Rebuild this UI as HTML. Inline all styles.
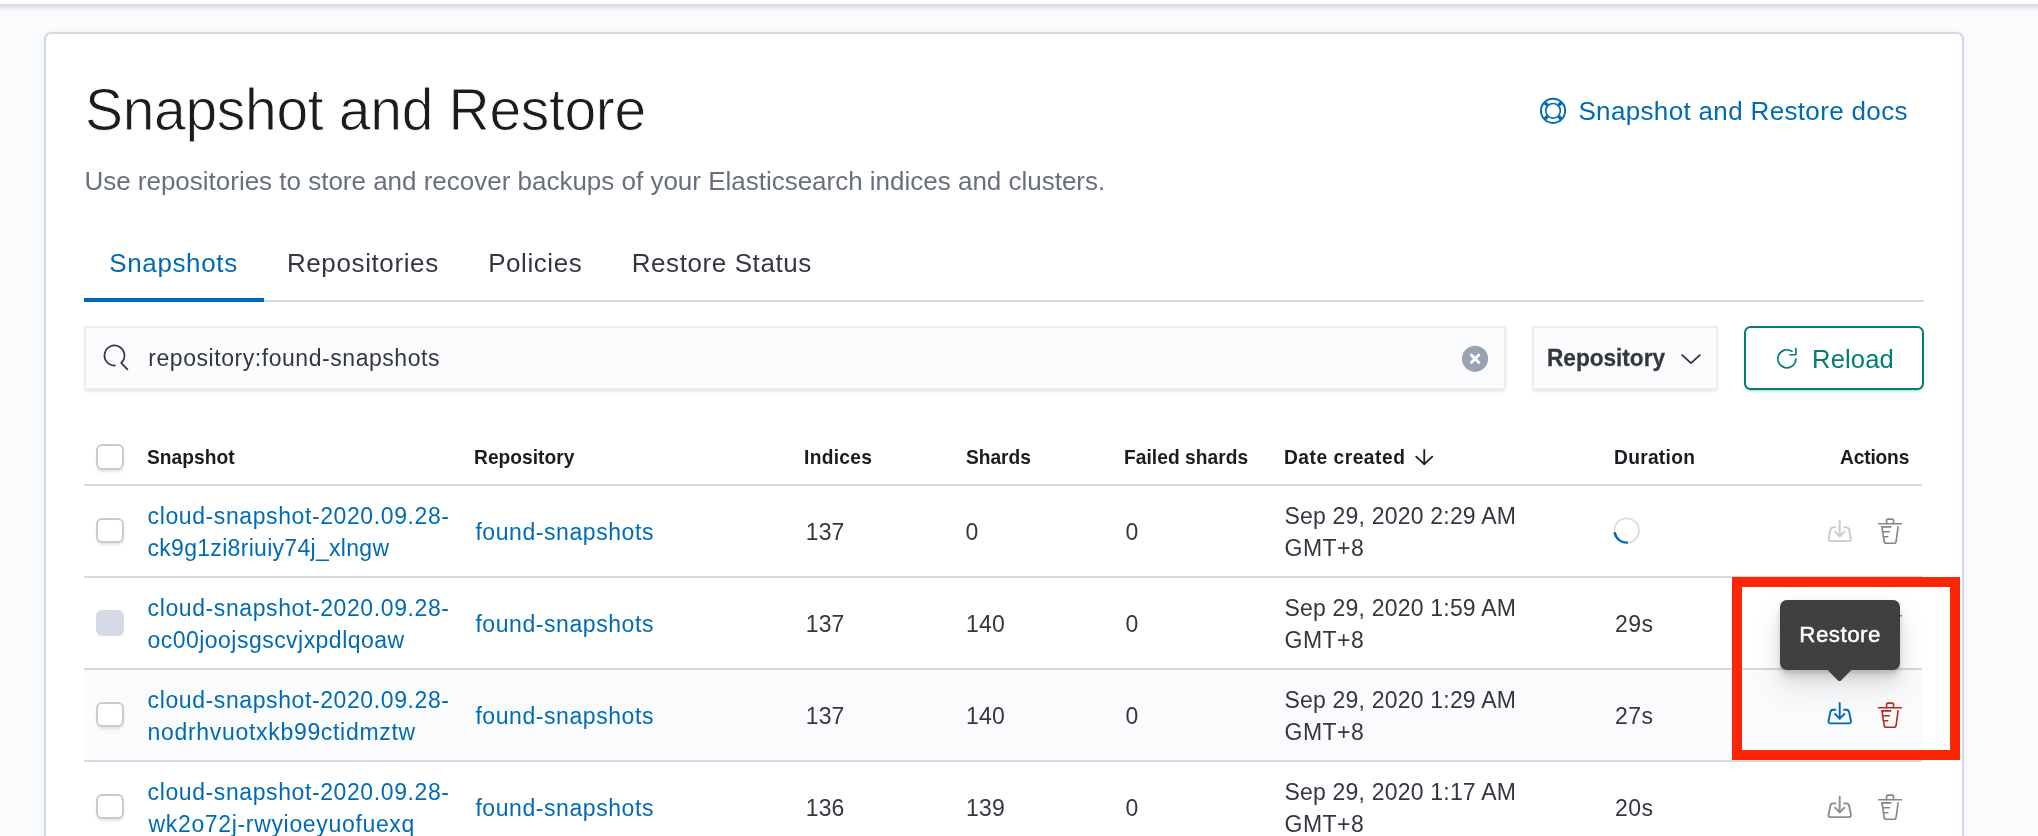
<!DOCTYPE html>
<html lang="en">
<head>
<meta charset="utf-8">
<title>Snapshot and Restore</title>
<style>
html,body{margin:0;padding:0}
body{width:2038px;height:836px;overflow:hidden;background:#fafbfd;position:relative;font-family:"Liberation Sans",sans-serif;color:#343741}
.abs,.t{position:absolute}
.t{white-space:nowrap;display:block;margin:0;padding:0;font-weight:400}
.title{-webkit-text-stroke:0.9px #fff}
.tip{-webkit-text-stroke:0.45px #fff}
.b{-webkit-text-stroke:0.3px #343741}
#topbar{left:0;top:0;width:2038px;height:4px;background:#fff;box-shadow:0 0 0 0 #000}
#topshadow{left:0;top:4px;width:2038px;height:8px;background:linear-gradient(#cfd5e2 0,#dde1ea 25%,#eef0f5 60%,#fafbfd 100%)}
#panel{left:44px;top:32px;width:1916px;height:900px;border:2px solid #d3dae6;border-radius:7px;background:#fff;box-shadow:0 1px 6px -2px rgba(152,162,179,.3)}
#tabline{left:84px;top:300px;width:1840px;height:2px;background:#d3dae6}
#tabsel{left:84px;top:298px;width:180px;height:4px;background:#006bb4}
.field{background:#fbfcfd;border:2px solid #eaedf3;box-sizing:border-box;box-shadow:0 2px 3px -1px rgba(152,162,179,.35)}
#search{left:84px;top:326px;width:1422px;height:64px}
#filter{left:1532px;top:326px;width:186px;height:64px}
#reload{left:1744px;top:326px;width:180px;height:64px;box-sizing:border-box;border:2px solid #017d73;border-radius:6.5px;background:#fff;box-shadow:0 2px 3px -1px rgba(1,125,115,.35)}
.hline{left:84px;width:1838px;height:2px;background:#d3dae6}
.rowbg{left:84px;width:1838px;height:90px;background:#fafbfd}
.cb{left:96px;width:28px;height:25px;box-sizing:border-box;border:2px solid #c9cbcd;border-radius:6px;background:#fff;box-shadow:0 3px 3px -1px rgba(152,162,179,.3)}
.cb.dis{border:0;background:#d3dae6;box-shadow:none}
#redbox{left:1732px;top:577px;width:208px;height:163px;border:10px solid #fb2604}
#tip{left:1780px;top:600px;width:120px;height:70px;border-radius:7px;background:#404040;box-shadow:0 18px 36px 0 rgba(0,0,0,.09),0 9px 18px 0 rgba(0,0,0,.09),0 6px 6px 0 rgba(0,0,0,.08),0 3px 3px 0 rgba(0,0,0,.08)}
#tiparrow{left:1830.2px;top:659px;width:19px;height:19px;background:#404040;transform:rotate(45deg);border-radius:2.5px}
svg{position:absolute;overflow:visible}
#txt{left:0;top:0;width:2038px;height:836px;will-change:transform}
</style>
</head>
<body>
<div class="abs" id="topbar"></div>
<div class="abs" id="topshadow"></div>
<div class="abs" id="panel"></div>

<div class="abs" id="tabline"></div>
<div class="abs" id="tabsel"></div>

<div class="abs field" id="search"></div>
<div class="abs field" id="filter"></div>
<div class="abs" id="reload"></div>

<div class="abs hline" style="top:484px"></div>
<div class="abs hline" style="top:576px"></div>
<div class="abs hline" style="top:668px"></div>
<div class="abs rowbg" style="top:670px"></div>
<div class="abs hline" style="top:760px"></div>

<div class="abs cb" style="top:444px;height:26px"></div>
<div class="abs cb" style="top:518px"></div>
<div class="abs cb dis" style="top:610px;height:26px"></div>
<div class="abs cb" style="top:702px"></div>
<div class="abs cb" style="top:794px"></div>

<svg width="2038" height="836" viewBox="0 0 2038 836" style="left:0;top:0" fill="none" stroke-linecap="round" stroke-linejoin="round">
  <!-- help / lifesaver icon -->
  <g stroke="#006bb4">
    <circle cx="1553.05" cy="110.85" r="12.1" stroke-width="1.9"/>
    <circle cx="1553.05" cy="110.85" r="7.3" stroke-width="1.6"/>
    <path stroke-width="3.4" stroke-linecap="butt" d="M1547.6 105.4L1544.9 102.7M1558.5 105.4L1561.2 102.7M1547.6 116.3L1544.9 119M1558.5 116.3L1561.2 119"/>
  </g>
  <!-- search icon -->
  <g stroke="#343741" stroke-width="1.75">
    <path d="M114.9 365.5A10 10 0 1 1 121.2 362.9L127.4 369.3"/>
  </g>
  <!-- clear button -->
  <circle cx="1475.05" cy="358.85" r="13.05" fill="#98a2b3"/>
  <path d="M1471.3 355.1L1478.8 362.6M1478.8 355.1L1471.3 362.6" stroke="#fff" stroke-width="2.8"/>
  <!-- chevron -->
  <path d="M1682.2 355.1L1691 363.1L1699.8 355.1" stroke="#343741" stroke-width="1.9"/>
  <!-- refresh -->
  <g stroke="#017d73" stroke-width="1.65">
    <path d="M1792 351.4A9 9 0 1 0 1795.85 358.9"/>
    <path d="M1795.9 348.1V354.7H1789.4" stroke-linecap="butt"/>
  </g>
  <!-- sort arrow -->
  <g stroke="#1a1c21" stroke-width="1.8">
    <path d="M1424.25 449.9V464"/>
    <path d="M1416.2 456.7L1424.25 464.2L1432.3 456.7"/>
  </g>
  <!-- spinner -->
  <circle cx="1626.7" cy="530.5" r="12.2" stroke="#d6dce8" stroke-width="1.8"/>
  <path d="M1614.6 532.3A12.2 12.2 0 0 0 1627.9 542.6" stroke="#006bb4" stroke-width="2.4" stroke-linecap="butt"/>
  <!-- row action icons -->
  <g stroke="#c9cacc" stroke-width="1.9">
    <path d="M1839.7 520.7V536.2"/>
      <path d="M1835.1 531.7L1839.7 536.4L1844.4 531.7"/>
      <path d="M1835.4 527.4H1833.2Q1830.9 527.4 1830.4 529.7L1828.6 538.4Q1828 541.1 1830.7 541.1H1848.8Q1851.5 541.1 1850.9 538.4L1849.1 529.7Q1848.6 527.4 1846.3 527.4H1844.1"/>
  </g>
  <g stroke="#848486" stroke-width="1.6">
    <path d="M1886.6 523.6V520.6Q1886.6 519.1 1888.1 519.1H1892Q1893.5 519.1 1893.5 520.6V523.6"/>
      <path d="M1878.7 523.7H1901.4"/>
      <path d="M1882 526.9L1884.1 541.3Q1884.4 543.3 1886.4 543.3H1893.8Q1895.8 543.3 1896.1 541.3L1898.1 526.9"/>
      <path d="M1882 526.9H1890.8M1882.9 531.8H1889.3M1883.6 536.8H1887.8"/>
  </g>
  <g stroke="#8c8c8e" stroke-width="1.9" transform="translate(0 92)">
    <path d="M1839.7 520.7V536.2"/>
      <path d="M1835.1 531.7L1839.7 536.4L1844.4 531.7"/>
      <path d="M1835.4 527.4H1833.2Q1830.9 527.4 1830.4 529.7L1828.6 538.4Q1828 541.1 1830.7 541.1H1848.8Q1851.5 541.1 1850.9 538.4L1849.1 529.7Q1848.6 527.4 1846.3 527.4H1844.1"/>
  </g>
  <g stroke="#848486" stroke-width="1.6" transform="translate(0 92)">
    <path d="M1886.6 523.6V520.6Q1886.6 519.1 1888.1 519.1H1892Q1893.5 519.1 1893.5 520.6V523.6"/>
      <path d="M1878.7 523.7H1901.4"/>
      <path d="M1882 526.9L1884.1 541.3Q1884.4 543.3 1886.4 543.3H1893.8Q1895.8 543.3 1896.1 541.3L1898.1 526.9"/>
      <path d="M1882 526.9H1890.8M1882.9 531.8H1889.3M1883.6 536.8H1887.8"/>
  </g>
  <g stroke="#006bb4" stroke-width="1.9" transform="translate(0 182.3)">
    <path d="M1839.7 520.7V536.2"/>
      <path d="M1835.1 531.7L1839.7 536.4L1844.4 531.7"/>
      <path d="M1835.4 527.4H1833.2Q1830.9 527.4 1830.4 529.7L1828.6 538.4Q1828 541.1 1830.7 541.1H1848.8Q1851.5 541.1 1850.9 538.4L1849.1 529.7Q1848.6 527.4 1846.3 527.4H1844.1"/>
  </g>
  <g stroke="#bd271e" stroke-width="1.6" transform="translate(0 184)">
    <path d="M1886.6 523.6V520.6Q1886.6 519.1 1888.1 519.1H1892Q1893.5 519.1 1893.5 520.6V523.6"/>
      <path d="M1878.7 523.7H1901.4"/>
      <path d="M1882 526.9L1884.1 541.3Q1884.4 543.3 1886.4 543.3H1893.8Q1895.8 543.3 1896.1 541.3L1898.1 526.9"/>
      <path d="M1882 526.9H1890.8M1882.9 531.8H1889.3M1883.6 536.8H1887.8"/>
  </g>
  <g stroke="#8c8c8e" stroke-width="1.9" transform="translate(0 276)">
    <path d="M1839.7 520.7V536.2"/>
      <path d="M1835.1 531.7L1839.7 536.4L1844.4 531.7"/>
      <path d="M1835.4 527.4H1833.2Q1830.9 527.4 1830.4 529.7L1828.6 538.4Q1828 541.1 1830.7 541.1H1848.8Q1851.5 541.1 1850.9 538.4L1849.1 529.7Q1848.6 527.4 1846.3 527.4H1844.1"/>
  </g>
  <g stroke="#848486" stroke-width="1.6" transform="translate(0 276)">
    <path d="M1886.6 523.6V520.6Q1886.6 519.1 1888.1 519.1H1892Q1893.5 519.1 1893.5 520.6V523.6"/>
      <path d="M1878.7 523.7H1901.4"/>
      <path d="M1882 526.9L1884.1 541.3Q1884.4 543.3 1886.4 543.3H1893.8Q1895.8 543.3 1896.1 541.3L1898.1 526.9"/>
      <path d="M1882 526.9H1890.8M1882.9 531.8H1889.3M1883.6 536.8H1887.8"/>
  </g>
</svg>


<div class="abs" id="tip"></div>
<div class="abs" id="tiparrow"></div>
<div class="abs" id="txt">
<h1 class="t title" style="left:85.00px;top:71px;font-size:60px;line-height:78px;letter-spacing:-0.331px;color:#1a1c21;transform:scaleX(0.95);transform-origin:0 0">Snapshot and Restore</h1>
<span class="t" style="left:1578.40px;top:94px;font-size:26px;line-height:34px;letter-spacing:0.343px;color:#006bb4">Snapshot and Restore docs</span>
<p class="t" style="left:84.40px;top:164px;font-size:26px;line-height:34px;letter-spacing:-0.010px;color:#69707d">Use repositories to store and recover backups of your Elasticsearch indices and clusters.</p>
<span class="t" style="left:109.20px;top:246px;font-size:26px;line-height:34px;letter-spacing:0.642px;color:#006bb4">Snapshots</span>
<span class="t" style="left:286.90px;top:246px;font-size:26px;line-height:34px;letter-spacing:0.617px;color:#343741">Repositories</span>
<span class="t" style="left:488.20px;top:246px;font-size:26px;line-height:34px;letter-spacing:0.558px;color:#343741">Policies</span>
<span class="t" style="left:631.70px;top:246px;font-size:26px;line-height:34px;letter-spacing:0.587px;color:#343741">Restore Status</span>
<span class="t" style="left:148.30px;top:343px;font-size:23px;line-height:30px;letter-spacing:0.550px;color:#343741">repository:found-snapshots</span>
<span class="t b" style="left:1546.57px;top:342px;font-size:24.3px;line-height:32px;letter-spacing:-0.005px;color:#343741;font-weight:700;transform:scaleX(0.93);transform-origin:0 0">Repository</span>
<span class="t" style="left:1812.10px;top:343px;font-size:25.6px;line-height:33px;letter-spacing:0.126px;color:#017d73">Reload</span>
<span class="t" style="left:147.10px;top:444px;font-size:20.4px;line-height:27px;letter-spacing:0.043px;color:#1a1c21;font-weight:700;transform:scaleX(0.94);transform-origin:0 0">Snapshot</span>
<span class="t" style="left:474.26px;top:444px;font-size:20.4px;line-height:27px;letter-spacing:0.036px;color:#1a1c21;font-weight:700;transform:scaleX(0.94);transform-origin:0 0">Repository</span>
<span class="t" style="left:804.16px;top:444px;font-size:20.4px;line-height:27px;letter-spacing:0.322px;color:#1a1c21;font-weight:700;transform:scaleX(0.94);transform-origin:0 0">Indices</span>
<span class="t" style="left:965.50px;top:444px;font-size:20.4px;line-height:27px;letter-spacing:-0.034px;color:#1a1c21;font-weight:700;transform:scaleX(0.94);transform-origin:0 0">Shards</span>
<span class="t" style="left:1124.26px;top:444px;font-size:20.4px;line-height:27px;letter-spacing:0.061px;color:#1a1c21;font-weight:700;transform:scaleX(0.94);transform-origin:0 0">Failed shards</span>
<span class="t" style="left:1284.06px;top:444px;font-size:20.4px;line-height:27px;letter-spacing:0.562px;color:#1a1c21;font-weight:700;transform:scaleX(0.94);transform-origin:0 0">Date created</span>
<span class="t" style="left:1614.06px;top:444px;font-size:20.4px;line-height:27px;letter-spacing:0.315px;color:#1a1c21;font-weight:700;transform:scaleX(0.94);transform-origin:0 0">Duration</span>
<span class="t" style="left:1840.00px;top:444px;font-size:20.4px;line-height:27px;letter-spacing:-0.171px;color:#1a1c21;font-weight:700;transform:scaleX(0.94);transform-origin:0 0">Actions</span>
<span class="t" style="left:147.60px;top:501px;font-size:23px;line-height:30px;letter-spacing:0.597px;color:#006bb4">cloud-snapshot-2020.09.28-</span>
<span class="t" style="left:147.50px;top:533px;font-size:23px;line-height:30px;letter-spacing:0.299px;color:#006bb4">ck9g1zi8riuiy74j_xlngw</span>
<span class="t" style="left:475.40px;top:517px;font-size:23px;line-height:30px;letter-spacing:0.567px;color:#006bb4">found-snapshots</span>
<span class="t" style="left:805.80px;top:517px;font-size:23px;line-height:30px;letter-spacing:0.058px;color:#343741">137</span>
<span class="t" style="left:965.50px;top:517px;font-size:23px;line-height:30px;letter-spacing:0.000px;color:#343741">0</span>
<span class="t" style="left:1125.50px;top:517px;font-size:23px;line-height:30px;letter-spacing:0.000px;color:#343741">0</span>
<span class="t" style="left:1284.50px;top:501px;font-size:23px;line-height:30px;letter-spacing:0.198px;color:#343741">Sep 29, 2020 2:29 AM</span>
<span class="t" style="left:1284.50px;top:533px;font-size:23px;line-height:30px;letter-spacing:0.492px;color:#343741">GMT+8</span>
<span class="t" style="left:147.60px;top:593px;font-size:23px;line-height:30px;letter-spacing:0.597px;color:#006bb4">cloud-snapshot-2020.09.28-</span>
<span class="t" style="left:147.50px;top:625px;font-size:23px;line-height:30px;letter-spacing:0.469px;color:#006bb4">oc00joojsgscvjxpdlqoaw</span>
<span class="t" style="left:475.40px;top:609px;font-size:23px;line-height:30px;letter-spacing:0.567px;color:#006bb4">found-snapshots</span>
<span class="t" style="left:805.80px;top:609px;font-size:23px;line-height:30px;letter-spacing:0.058px;color:#343741">137</span>
<span class="t" style="left:965.90px;top:609px;font-size:23px;line-height:30px;letter-spacing:0.308px;color:#343741">140</span>
<span class="t" style="left:1125.50px;top:609px;font-size:23px;line-height:30px;letter-spacing:0.000px;color:#343741">0</span>
<span class="t" style="left:1284.50px;top:593px;font-size:23px;line-height:30px;letter-spacing:0.198px;color:#343741">Sep 29, 2020 1:59 AM</span>
<span class="t" style="left:1284.50px;top:625px;font-size:23px;line-height:30px;letter-spacing:0.492px;color:#343741">GMT+8</span>
<span class="t" style="left:1615.00px;top:609px;font-size:23px;line-height:30px;letter-spacing:0.458px;color:#343741">29s</span>
<span class="t" style="left:147.60px;top:685px;font-size:23px;line-height:30px;letter-spacing:0.597px;color:#006bb4">cloud-snapshot-2020.09.28-</span>
<span class="t" style="left:147.60px;top:717px;font-size:23px;line-height:30px;letter-spacing:0.685px;color:#006bb4">nodrhvuotxkb99ctidmztw</span>
<span class="t" style="left:475.40px;top:701px;font-size:23px;line-height:30px;letter-spacing:0.567px;color:#006bb4">found-snapshots</span>
<span class="t" style="left:805.80px;top:701px;font-size:23px;line-height:30px;letter-spacing:0.058px;color:#343741">137</span>
<span class="t" style="left:965.90px;top:701px;font-size:23px;line-height:30px;letter-spacing:0.308px;color:#343741">140</span>
<span class="t" style="left:1125.50px;top:701px;font-size:23px;line-height:30px;letter-spacing:0.000px;color:#343741">0</span>
<span class="t" style="left:1284.50px;top:685px;font-size:23px;line-height:30px;letter-spacing:0.198px;color:#343741">Sep 29, 2020 1:29 AM</span>
<span class="t" style="left:1284.50px;top:717px;font-size:23px;line-height:30px;letter-spacing:0.492px;color:#343741">GMT+8</span>
<span class="t" style="left:1615.00px;top:701px;font-size:23px;line-height:30px;letter-spacing:0.458px;color:#343741">27s</span>
<span class="t" style="left:147.60px;top:777px;font-size:23px;line-height:30px;letter-spacing:0.597px;color:#006bb4">cloud-snapshot-2020.09.28-</span>
<span class="t" style="left:148.50px;top:809px;font-size:23px;line-height:30px;letter-spacing:0.664px;color:#006bb4">wk2o72j-rwyioeyuofuexq</span>
<span class="t" style="left:475.40px;top:793px;font-size:23px;line-height:30px;letter-spacing:0.567px;color:#006bb4">found-snapshots</span>
<span class="t" style="left:805.80px;top:793px;font-size:23px;line-height:30px;letter-spacing:0.058px;color:#343741">136</span>
<span class="t" style="left:965.90px;top:793px;font-size:23px;line-height:30px;letter-spacing:0.308px;color:#343741">139</span>
<span class="t" style="left:1125.50px;top:793px;font-size:23px;line-height:30px;letter-spacing:0.000px;color:#343741">0</span>
<span class="t" style="left:1284.50px;top:777px;font-size:23px;line-height:30px;letter-spacing:0.198px;color:#343741">Sep 29, 2020 1:17 AM</span>
<span class="t" style="left:1284.50px;top:809px;font-size:23px;line-height:30px;letter-spacing:0.492px;color:#343741">GMT+8</span>
<span class="t" style="left:1615.00px;top:793px;font-size:23px;line-height:30px;letter-spacing:0.458px;color:#343741">20s</span>
<span class="t tip" style="left:1799.30px;top:620px;font-size:22.4px;line-height:29px;letter-spacing:0.459px;color:#ffffff">Restore</span>
</div>
<div class="abs" id="redbox"></div>
</body>
</html>
